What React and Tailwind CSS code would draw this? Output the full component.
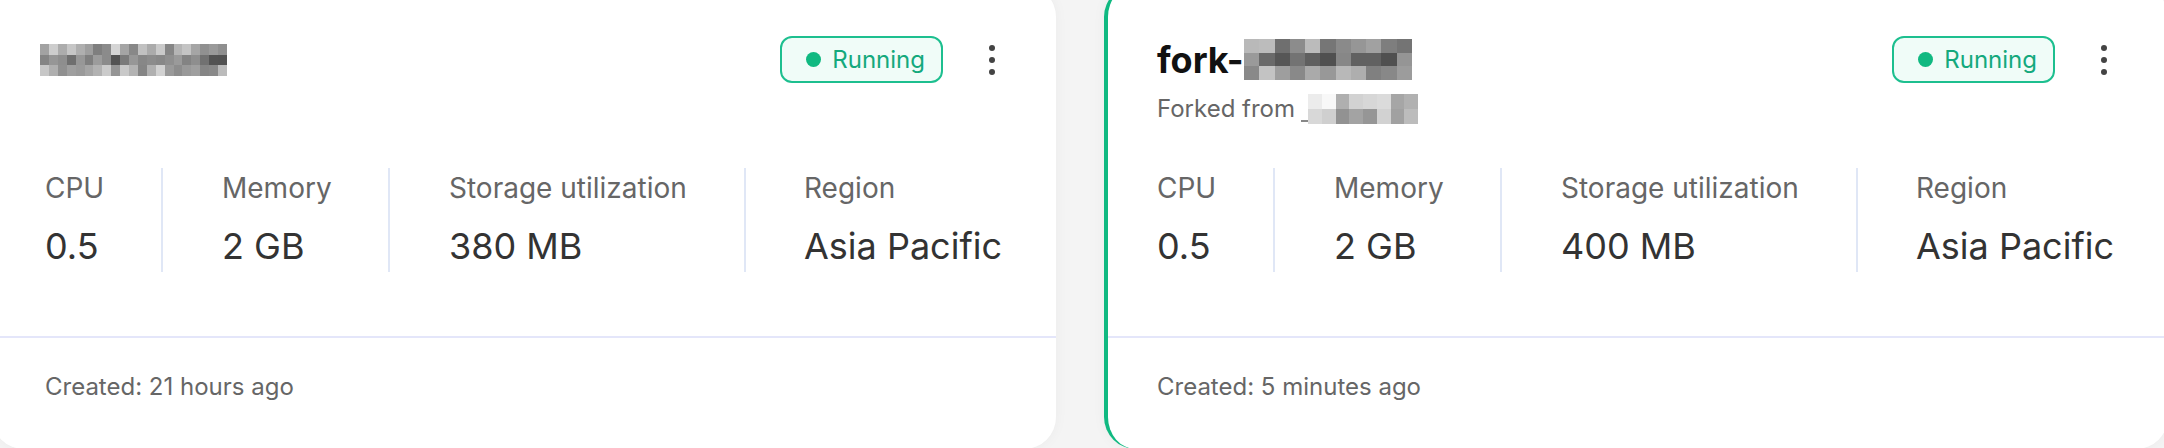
import React from "react";

// pixelated placeholder for the blurred-out names
function Mosaic({ w, h, cols, rows, seed, bases }) {
    let s = seed;
    const rnd = () => {
        s = (s * 9301 + 49297) % 233280;
        return s / 233280;
    };
    const cw = w / cols;
    const ch = h / rows;
    const cells = [];
    for (let r = 0; r < rows; r++) {
        for (let c = 0; c < cols; c++) {
            const base = bases[r % bases.length];
            const v = Math.max(80, Math.min(250, Math.round(base + (rnd() - 0.5) * 90)));
            cells.push(
                <rect
                    key={r + "-" + c}
                    x={c * cw}
                    y={r * ch}
                    width={cw + 0.5}
                    height={ch + 0.5}
                    fill={`rgb(${v},${v},${v})`}
                />
            );
        }
    }
    return (
        <svg width={w} height={h} viewBox={`0 0 ${w} ${h}`} shapeRendering="crispEdges" className="block">
            {cells}
        </svg>
    );
}

function Kebab() {
    return (
        <svg width="22" height="36" viewBox="0 0 22 36" className="block">
            <circle cx="11" cy="6" r="3" fill="#444" />
            <circle cx="11" cy="18" r="3" fill="#444" />
            <circle cx="11" cy="30" r="3" fill="#444" />
        </svg>
    );
}

function Metric({ label, value, className }) {
    return (
        <div className={className}>
            <div className="text-[28px] leading-[40px] text-[#666]">{label}</div>
            <div className="mt-[12px] text-[36px] leading-[52px] text-[#333]">{value}</div>
        </div>
    );
}

function Card({ fork, storage, created }) {
    return (
        <div
            className={
                "w-[1064px] h-[464px] shrink-0 rounded-[32px] bg-white border-l-4 flex flex-col overflow-hidden shadow-[0_0_14px_rgba(0,0,0,0.04)] " +
                (fork ? "border-[#10b981]" : "border-white")
            }
        >
            <div className="h-[351px] pl-[49px] pr-[53px] pt-[51px]">
                <div className="h-[132px]">
                    <div className="flex items-center justify-between h-[47px]">
                        {fork ? (
                            <div className="flex items-center">
                                <span className="text-[36px] leading-[44px] font-bold text-[#111]">fork-</span>
                                <Mosaic w={168} h={41} cols={11} rows={3} seed={17} bases={[150, 115, 165]} />
                            </div>
                        ) : (
                            <div className="-ml-[5px] flex items-center">
                                <Mosaic w={187} h={32} cols={21} rows={3} seed={5} bases={[170, 115, 170]} />
                            </div>
                        )}
                        <div className="flex items-center gap-[38px]">
                            <div className="flex items-center gap-[11px] h-[47px] pl-[24px] pr-[16px] rounded-[12px] border-2 border-[#1dbf8f] bg-[#f0fcf8]">
                                <span className="w-[15px] h-[15px] rounded-full bg-[#10b981]" />
                                <span className="text-[24px] leading-[32px] text-[#14a97d]">Running</span>
                            </div>
                            <Kebab />
                        </div>
                    </div>
                    {fork && (
                        <div className="mt-[10px] flex items-center text-[24px] leading-[32px] text-[#666]">
                            <span>Forked from</span>
                            <span className="ml-[6px] flex items-end">
                                <span className="w-[7px] h-[2px] mb-[2px] bg-[#888]" />
                                <Mosaic w={110} h={30} cols={8} rows={2} seed={41} bases={[205, 180]} />
                            </span>
                        </div>
                    )}
                </div>
                <div className="flex">
                    <Metric label="CPU" value="0.5" className="w-[116px] shrink-0" />
                    <Metric label="Memory" value="2 GB" className="w-[227px] shrink-0 border-l-2 border-[#e0e7f6] pl-[59px]" />
                    <Metric label="Storage utilization" value={storage} className="w-[356px] shrink-0 border-l-2 border-[#e0e7f6] pl-[59px]" />
                    <Metric label="Region" value="Asia Pacific" className="flex-1 border-l-2 border-[#e0e7f6] pl-[58px]" />
                </div>
            </div>
            <div className="border-t-2 border-[#e4e6fa] pl-[49px] pt-[33px]">
                <div className="text-[24px] leading-[32px] text-[#666]">{created}</div>
            </div>
        </div>
    );
}

export default function App() {
    return (
        <div className="h-[448px] w-full overflow-hidden bg-[#f4f4f4] font-['Inter','Noto_Sans',sans-serif]">
            <div className="flex gap-[48px] -ml-2 -mt-[15px]">
                <Card storage="380 MB" created="Created: 21 hours ago" />
                <Card fork storage="400 MB" created="Created: 5 minutes ago" />
            </div>
        </div>
    );
}
